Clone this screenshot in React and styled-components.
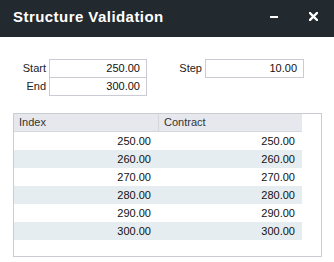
import React from 'react';
import styled, { createGlobalStyle } from 'styled-components';

const GlobalStyle = createGlobalStyle`
  html, body {
    margin: 0;
    padding: 0;
    background: #ffffff;
  }
  body {
    font-family: 'Liberation Sans', Arial, sans-serif;
  }
`;

const Window = styled.div`
  width: 334px;
  height: 262px;
  background: #ffffff;
  display: flex;
  flex-direction: column;
  overflow: hidden;
`;

const TitleBar = styled.div`
  height: 37px;
  box-sizing: border-box;
  padding: 0 0 3px 13px;
  background: #22292f;
  display: flex;
  align-items: center;
`;

const Title = styled.h1`
  margin: 0;
  flex: 1;
  color: #ffffff;
  font-family: 'Liberation Sans', Arial, sans-serif;
  font-size: 15px;
  font-weight: 700;
  letter-spacing: 0.45px;
`;

const TitleButton = styled.button`
  border: 0;
  padding: 0;
  background: none;
  width: ${(p) => p.$w}px;
  height: 12px;
  margin-right: ${(p) => p.$mr}px;
  display: flex;
  align-items: center;
  justify-content: center;
  color: #ffffff;
  cursor: pointer;
`;

const Form = styled.div`
  display: grid;
  grid-template-columns: 33px 98px 52px 99px;
  grid-auto-rows: 18px;
  column-gap: 3px;
  padding: 22px 0 0 13px;
`;

const Label = styled.label`
  font-size: 11px;
  color: #222;
  display: flex;
  align-items: center;
  justify-content: flex-end;
  padding-top: 1px;
`;

const Field = styled.div`
  border: 1px solid #c9cdd3;
  margin-bottom: -1px;
  height: 19px;
  box-sizing: border-box;
  padding-right: 6px;
  font-size: 11px;
  color: #111;
  display: flex;
  align-items: center;
  justify-content: flex-end;
`;

const Grid = styled.div`
  margin: 18px 12px 5px 13px;
  height: 145px;
  box-sizing: border-box;
  border: 1px solid #c9cdd3;
`;

const Header = styled.div`
  display: grid;
  grid-template-columns: 144px 144px;
  height: 18px;
  box-sizing: border-box;
  background: #e6e8ee;
  border-bottom: 1px solid #d4d8df;
  width: 288px;
`;

const HeaderCell = styled.div`
  font-size: 11px;
  color: #333;
  padding-left: 5px;
  display: flex;
  align-items: center;
  border-left: ${(p) => (p.$first ? 'none' : '1px solid #d4d8df')};
`;

const Row = styled.div`
  display: grid;
  grid-template-columns: 144px 144px;
  height: 18px;
  width: 288px;
  background: ${(p) => (p.$alt ? '#e6edf0' : '#ffffff')};
`;

const Cell = styled.div`
  font-size: 11px;
  color: #111;
  padding-right: 7px;
  display: flex;
  align-items: center;
  justify-content: flex-end;
`;

const values = [250, 260, 270, 280, 290, 300];

export default function App() {
  return (
    <Window>
      <GlobalStyle />
      <TitleBar>
        <Title>Structure Validation</Title>
        <TitleButton $w={8} $mr={31} aria-label="minimize">
          <svg width="8" height="12" viewBox="0 0 8 12">
            <rect x="0" y="5" width="8" height="2" fill="#fff" />
          </svg>
        </TitleButton>
        <TitleButton $w={9} $mr={16} aria-label="close">
          <svg width="9" height="9" viewBox="0 0 9 9">
            <path d="M1 1 L8 8 M8 1 L1 8" stroke="#fff" strokeWidth="2.4" strokeLinecap="square" />
          </svg>
        </TitleButton>
      </TitleBar>

      <Form>
        <Label>Start</Label>
        <Field>250.00</Field>
        <Label>Step</Label>
        <Field>10.00</Field>
        <Label>End</Label>
        <Field>300.00</Field>
      </Form>

      <Grid>
        <Header>
          <HeaderCell $first>Index</HeaderCell>
          <HeaderCell>Contract</HeaderCell>
        </Header>
        {values.map((v, i) => (
          <Row key={v} $alt={i % 2 === 1}>
            <Cell>{v.toFixed(2)}</Cell>
            <Cell>{v.toFixed(2)}</Cell>
          </Row>
        ))}
      </Grid>
    </Window>
  );
}
